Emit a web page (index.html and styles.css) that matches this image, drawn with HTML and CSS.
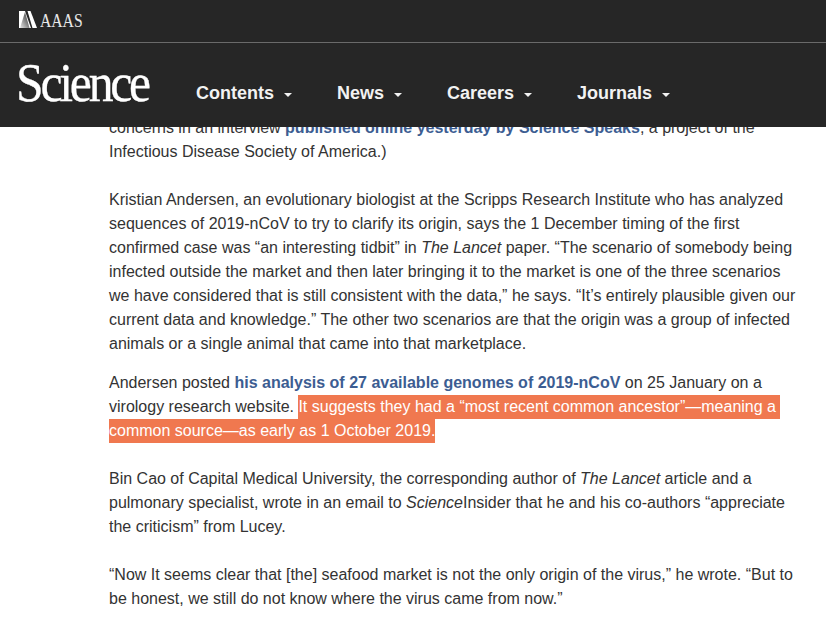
FILE: index.html
```html
<!DOCTYPE html>
<html lang="en">
<head>
<meta charset="utf-8">
<title>Science</title>
<link rel="stylesheet" href="styles.css">
</head>
<body>
<header class="site-header">
  <div class="topbar">
    <a class="aaas">
      <svg class="aaas-mark" width="18" height="17" viewBox="0 0 18 17" aria-hidden="true">
        <defs>
          <linearGradient id="wedge" x1="0" y1="1" x2="1" y2="0">
            <stop offset="0" stop-color="#e8e8e8"/>
            <stop offset="0.6" stop-color="#707070"/>
            <stop offset="1" stop-color="#555"/>
          </linearGradient>
        </defs>
        <path d="M0 0 H6 L12 17 H0 Z" fill="#fff"/>
        <path d="M1 17 L6 1 L10.5 17 Z" fill="url(#wedge)"/>
        <path d="M8.5 0 H11.5 L18 17 H13.5 Z" fill="#fff"/>
      </svg>
      <span class="aaas-text">AAAS</span>
    </a>
  </div>
  <div class="mainbar">
    <a class="logo"><span class="logo-text">Science</span></a>
    <nav class="nav">
      <a class="nav-item">Contents<span class="caret"></span></a>
      <a class="nav-item">News<span class="caret"></span></a>
      <a class="nav-item">Careers<span class="caret"></span></a>
      <a class="nav-item">Journals<span class="caret"></span></a>
    </nav>
  </div>
</header>
<main class="article">
  <p class="para">concerns in an interview <a class="link">published online yesterday by Science Speaks</a>, a project of the Infectious Disease Society of America.)</p>
  <p class="para tight">Kristian Andersen, an evolutionary biologist at the Scripps Research Institute who has analyzed sequences of 2019-nCoV to try to clarify its origin, says the 1 December timing of the first confirmed case was “an interesting tidbit” in <em>The Lancet</em> paper. “The scenario of somebody being infected outside the market and then later bringing it to the market is one of the three scenarios we have considered that is still consistent with the data,” he says. “It’s entirely plausible given our current data and knowledge.” The other two scenarios are that the origin was a group of infected animals or a single animal that came into that marketplace.</p>
  <p class="para">Andersen posted <a class="link">his analysis of 27 available genomes of 2019-nCoV</a> on 25 January on a virology research website. <mark class="hl">It suggests they had a “most recent common ancestor”—meaning a common source—as early as 1 October 2019.</mark></p>
  <p class="para">Bin Cao of Capital Medical University, the corresponding author of <em>The Lancet</em> article and a pulmonary specialist, wrote in an email to <em>Science</em>Insider that he and his co-authors “appreciate the criticism” from Lucey.</p>
  <p class="para">“Now It seems clear that [the] seafood market is not the only origin of the virus,” he wrote. “But to be honest, we still do not know where the virus came from now.”</p>
</main>
</body>
</html>
```
FILE: styles.css
```css
* { box-sizing: border-box; }
html, body { margin: 0; height: 100%; overflow: hidden; background: #fff; }
body { font-family: "Liberation Sans", Arial, sans-serif; color: #333; font-size: 16px; line-height: 24px; }
.site-header { position: absolute; top: 0; left: 0; width: 100%; height: 127px; background: #262626; color: #fff; }
.topbar { height: 43px; border-bottom: 1px solid #6a6a6a; padding: 11px 0 0 19px; }
.aaas { display: flex; align-items: flex-start; }
.aaas-mark { display: block; }
.aaas-text { font-family: "Liberation Serif", serif; font-size: 18px; line-height: 20px; margin-left: 3px; color: #e8e8e8; transform: scaleX(0.87); transform-origin: left center; }
.mainbar { display: flex; padding-left: 16px; }
.logo { width: 180px; height: 80px; color: #fff; }
.logo-text { display: block; font-family: "Liberation Serif", serif; font-size: 54px; line-height: 80px; letter-spacing: -3.5px; transform: scaleX(0.92); transform-origin: left center; -webkit-text-stroke: 0.3px #fff; }
.nav { display: flex; gap: 45px; padding-top: 38px; align-items: flex-start; }
.nav-item { font-size: 18px; font-weight: 700; line-height: 24px; color: #f2f2f2; display: flex; align-items: center; }
.caret { width: 0; height: 0; border-left: 4.5px solid transparent; border-right: 4.5px solid transparent; border-top: 4px solid #f2f2f2; margin: 4px 0 0 10px; }
.article { padding: 116px 28px 0 109px; }
.para { margin: 0 0 24px; }
.tight { margin-bottom: 15px; }
.link { color: #3c5d92; font-weight: 700; }
.hl { background: #f0784f; color: #fff; padding: 3px 0 4px; white-space: pre-wrap; }
```
